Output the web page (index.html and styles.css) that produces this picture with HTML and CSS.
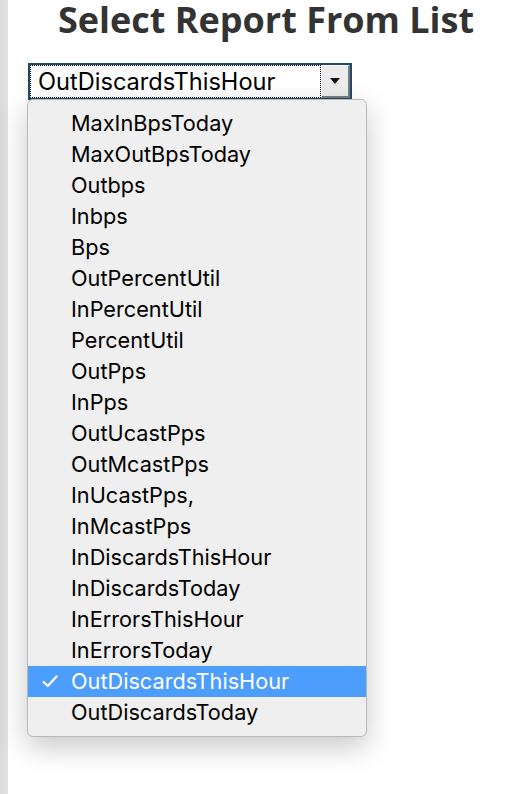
FILE: index.html
```html
<!DOCTYPE html>
<html>
<head>
<meta charset="utf-8">
<link rel="stylesheet" href="styles.css">
</head>
<body>
<div class="page">
  <div class="rail"></div>
  <main class="content">
    <h1 class="title">Select Report From List</h1>
    <div class="picker">
      <div class="select">
        <div class="select-value"><span>OutDiscardsThisHour</span></div>
        <div class="select-btn"><span class="tri"></span></div>
      </div>
      <ul class="menu">
        <li class="item">MaxInBpsToday</li>
        <li class="item">MaxOutBpsToday</li>
        <li class="item">Outbps</li>
        <li class="item">Inbps</li>
        <li class="item">Bps</li>
        <li class="item">OutPercentUtil</li>
        <li class="item">InPercentUtil</li>
        <li class="item">PercentUtil</li>
        <li class="item">OutPps</li>
        <li class="item">InPps</li>
        <li class="item">OutUcastPps</li>
        <li class="item">OutMcastPps</li>
        <li class="item">InUcastPps,</li>
        <li class="item">InMcastPps</li>
        <li class="item">InDiscardsThisHour</li>
        <li class="item">InDiscardsToday</li>
        <li class="item">InErrorsThisHour</li>
        <li class="item">InErrorsToday</li>
        <li class="item selected"><svg class="check" width="16" height="13" viewBox="0 0 16 13"><path d="M1.5 7 L5.8 11 L14.5 1.5" fill="none" stroke="#fff" stroke-width="2.2" stroke-linecap="round" stroke-linejoin="round"/></svg>OutDiscardsThisHour</li>
        <li class="item">OutDiscardsToday</li>
      </ul>
    </div>
  </main>
</div>
</body>
</html>
```

FILE: styles.css
```css
html, body {
  margin: 0;
  padding: 0;
  background: #ffffff;
}
.page {
  display: flex;
  min-height: 794px;
}
.rail {
  width: 8px;
  flex: none;
  background: linear-gradient(to right, #d9d9d9, #e2e2e2);
}
.content {
  flex: 1;
  padding-left: 20px;
}
.title {
  margin: 0;
  font-family: "Open Sans", sans-serif;
  font-weight: 700;
  font-size: 36px;
  line-height: 40px;
  color: #333333;
  text-align: center;
  padding-right: 2px;
}
.picker {
  position: relative;
  margin-top: 23px;
}
.select {
  display: flex;
  width: 324px;
  height: 37px;
  box-sizing: border-box;
  border: 2px solid #1d4b67;
  background: #ffffff;
}
.select-value {
  flex: 1;
  display: flex;
  align-items: center;
  border: 1px dotted #000;
  padding-left: 7px;
  font-family: Inter, "Liberation Sans", sans-serif;
  font-size: 23.6px;
  color: #000;
}
.select-btn {
  width: 29px;
  flex: none;
  display: flex;
  align-items: center;
  justify-content: center;
  box-sizing: border-box;
  background: #ececec;
  border-top: 1px solid #fafafa;
  border-left: 1px solid #fafafa;
  border-right: 2px solid #7b7b7b;
  border-bottom: 2px solid #7b7b7b;
}
.tri {
  width: 0;
  height: 0;
  border-left: 5px solid transparent;
  border-right: 5px solid transparent;
  border-top: 6px solid #111;
}
.menu {
  position: absolute;
  left: -1px;
  top: 36px;
  width: 340px;
  box-sizing: border-box;
  margin: 0;
  padding: 8px 0 8px 0;
  list-style: none;
  background: #efefef;
  border: 1px solid #b9b9b9;
  border-radius: 6px;
  box-shadow: 0 10px 28px rgba(0, 0, 0, 0.22);
}
.item {
  position: relative;
  height: 31px;
  line-height: 31px;
  padding-left: 43px;
  font-family: Inter, "Liberation Sans", sans-serif;
  font-size: 21.7px;
  color: #000;
  white-space: nowrap;
}
.item.selected {
  background: #4c9dfc;
  color: #fff;
}
.check {
  position: absolute;
  left: 14px;
  top: 9px;
}
```
